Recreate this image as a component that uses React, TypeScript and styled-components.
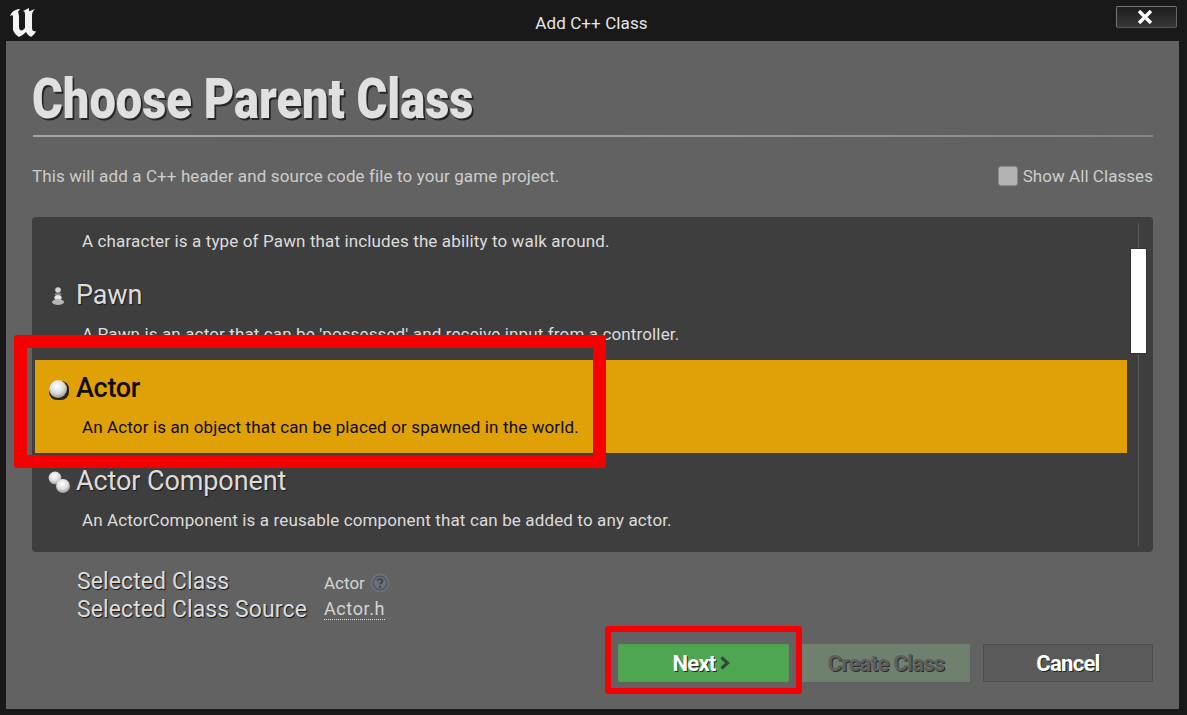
import styled, { createGlobalStyle } from 'styled-components'

const GlobalStyle = createGlobalStyle`
  html, body {
    margin: 0;
    padding: 0;
    background: #191919;
    overflow: hidden;
    font-family: Roboto, "Liberation Sans", sans-serif;
  }
  * { box-sizing: border-box; }
`

const Window = styled.div`
  position: relative;
  width: 1187px;
  height: 715px;
  display: flex;
  flex-direction: column;
  background: #191919;
`

const TitleBar = styled.header`
  position: relative;
  height: 41px;
  flex: none;
  display: flex;
  align-items: center;
  justify-content: center;
  padding: 0 10px 0 9px;
`

const TitleText = styled.span`
  font-size: 17px;
  letter-spacing: 0.1px;
  color: #e6e6e6;
  margin-top: 5px;
  margin-right: 3px;
`

const LogoSlot = styled.div`
  position: absolute;
  left: 9px;
  top: 8px;
  width: 29px;
  height: 30px;
`

const CloseButton = styled.button`
  position: absolute;
  right: 10px;
  top: 6px;
  width: 61px;
  height: 22px;
  padding: 0 4px 0 0;
  display: flex;
  align-items: center;
  justify-content: center;
  background: linear-gradient(#1d1d1d, #333 85%, #3a3a3a);
  border: 1px solid #777;
  border-right-color: #666;
  border-bottom-color: #555;
  border-radius: 2px;
`

const Content = styled.main`
  flex: 1;
  margin: 0 8px 6px 6px;
  padding: 28px 26px 27px;
  background: #626262;
  display: flex;
  flex-direction: column;
`

const Heading = styled.h1`
  margin: 0;
  height: 60px;
  font-size: 55px;
  line-height: 60px;
  font-weight: 900;
  color: #e0e0e0;
  white-space: nowrap;
  transform: scaleX(0.855);
  transform-origin: left center;
  text-shadow: 2px 2px 0 #262626;
`

const Divider = styled.hr`
  margin: 6px 0 0 1px;
  height: 2px;
  border: 0;
  background: linear-gradient(to right, #a6a6a6, #9b9b9b 60%, #858585);
`

const InfoRow = styled.div`
  margin-top: 28px;
  height: 22px;
  display: flex;
  align-items: center;
  justify-content: space-between;
`

const InfoText = styled.span`
  font-size: 17px;
  letter-spacing: 0.11px;
  color: #cdcdcd;
`

const ShowAll = styled.label`
  display: flex;
  align-items: center;
  gap: 5px;
  font-size: 17px;
  letter-spacing: 0.05px;
  color: #cdcdcd;
`

const Checkbox = styled.span`
  width: 20px;
  height: 20px;
  border-radius: 3px;
  background: #b3b3b3;
  border: 1px solid #8a8a8a;
`

const ClassPanel = styled.section`
  margin-top: 30px;
  height: 335px;
  flex: none;
  display: flex;
  background: #3e3e3e;
  border-radius: 4px;
  overflow: hidden;
`

const ClassList = styled.div`
  flex: 1;
  padding-left: 3px;
  min-width: 0;
`

const ClassRow = styled.div<{ $selected?: boolean; $offset?: number }>`
  height: 93px;
  margin-top: ${(p) => p.$offset ?? 0}px;
  padding: 0 0 0 12px;
  display: grid;
  grid-template-rows: 55px 1fr;
  background: ${(p) => (p.$selected ? '#dfa106' : 'transparent')};
  color: ${(p) => (p.$selected ? '#120c00' : '#dcdcdc')};
`

const RowHead = styled.div`
  display: flex;
  align-items: flex-end;
  gap: 7px;
  height: 44px;
`

const RowIcon = styled.span`
  width: 22px;
  height: 22px;
  flex: none;
  margin-bottom: 4px;
`

const RowTitle = styled.span<{ $selected?: boolean }>`
  font-size: 27px;
  line-height: 32px;
  font-weight: ${(p) => (p.$selected ? 500 : 400)};
  letter-spacing: ${(p) => (p.$selected ? '-0.3px' : '-0.1px')};
  text-shadow: ${(p) => (p.$selected ? 'none' : '1px 1px 1px #1c1c1c')};
`

const RowDesc = styled.span`
  padding-left: 35px;
  font-size: 17px;
  line-height: 20px;
  letter-spacing: 0.13px;
  margin-top: 2px;
`

const ScrollTrack = styled.div`
  position: relative;
  width: 26px;
  flex: none;
  margin: 6px 0;

  &::before {
    content: '';
    position: absolute;
    left: 11px;
    top: 0;
    bottom: 0;
    width: 1px;
    background: #5a5a5a;
  }
`

const ScrollThumb = styled.div`
  position: absolute;
  left: 3px;
  top: 25px;
  width: 17px;
  height: 106px;
  background: #fff;
  border: 1px solid #333;
`

const Details = styled.dl`
  margin: 16px 0 0 45px;
  height: 56px;
  display: grid;
  grid-template-columns: 247px 1fr;
  grid-auto-rows: 28px;
  align-items: center;
`

const DetailLabel = styled.dt`
  font-size: 23px;
  line-height: 28px;
  letter-spacing: 0.1px;
  color: #dcdcdc;
  text-shadow: 1px 1px 1px #151515;
`

const DetailValue = styled.dd`
  margin: 0;
  padding-top: 1px;
  display: flex;
  align-items: center;
  gap: 5px;
  font-size: 17px;
  color: #d4d4d4;
`

const SourceLink = styled.a`
  margin-top: -2px;
  font-size: 18px;
  line-height: 20px;
  letter-spacing: 0.6px;
  color: #d4d4d4;
  border-bottom: 1px dotted #e0e0e0;
`

const Footer = styled.footer`
  margin-top: 20px;
  height: 38px;
  display: flex;
  justify-content: flex-end;
  gap: 13px;
`

const ActionButton = styled.button<{ $variant: 'primary' | 'disabled' | 'plain'; $width: number }>`
  width: ${(p) => p.$width}px;
  height: 38px;
  padding: 0 ${(p) => (p.$variant === 'primary' ? 4 : 0)}px 0 0;
  display: flex;
  align-items: center;
  justify-content: center;
  gap: 3px;
  font-family: inherit;
  font-size: 22px;
  font-weight: 700;
  letter-spacing: -0.7px;
  border-radius: 1px;
  color: ${(p) => (p.$variant === 'disabled' ? '#5c5f5c' : '#fff')};
  background: ${(p) =>
    p.$variant === 'primary' ? '#4ea650' : p.$variant === 'disabled' ? '#6f806f' : '#5a5a5a'};
  border: 1px solid ${(p) =>
    p.$variant === 'primary' ? '#529c54' : p.$variant === 'disabled' ? '#6f7e6f' : '#4c4c4c'};
  text-shadow: ${(p) => (p.$variant === 'disabled' ? '1px 1px 0 #2c2c2c' : '1px 1px 0 #1d2a1d')};
`

const Callout = styled.div<{ $left: number; $top: number; $width: number; $height: number; $weight: number }>`
  position: absolute;
  left: ${(p) => p.$left}px;
  top: ${(p) => p.$top}px;
  width: ${(p) => p.$width}px;
  height: ${(p) => p.$height}px;
  border: ${(p) => p.$weight}px solid #f50000;
  border-radius: 3px;
  pointer-events: none;
`

function UnrealLogo() {
  return (
    <svg width="29" height="30" viewBox="0 0 29 30">
      <path
        fill="#f2f2f2"
        d="M1 8 C3 3 7 1 11 1 L9 4 C9 4 10 6 10 9 L10 19 C10 22 12 23 14 22 L16 20 L16 6 C16 4 15 3 14 3 L20 0 L20 3 L21 3 L26 1 C24 3 23 5 23 7 L23 20 C23 22 24 24 27 23 C26 26 24 27 22 29 C20 28 18 26 17 24 C15 26 12 28 10 29 C7 27 5 25 4 22 L4 9 C4 7 3 7 1 8 Z"
      />
    </svg>
  )
}

function CloseIcon() {
  return (
    <svg width="16" height="14" viewBox="0 0 16 14">
      <path d="M2 1 L14 13 M14 1 L2 13" stroke="#fff" strokeWidth="3.4" fill="none" />
    </svg>
  )
}

function Ball({ cx, cy, r, id }: { cx: number; cy: number; r: number; id: string }) {
  return (
    <>
      <radialGradient id={id} cx="45%" cy="35%" r="70%">
        <stop offset="0%" stopColor="#ffffff" />
        <stop offset="55%" stopColor="#dcdcdc" />
        <stop offset="100%" stopColor="#8a8a8a" />
      </radialGradient>
      <circle cx={cx} cy={cy} r={r} fill={`url(#${id})`} />
    </>
  )
}

function PawnIcon() {
  return (
    <svg width="22" height="22" viewBox="0 0 22 22">
      <circle cx="11" cy="5" r="2.8" fill="#d4d4d4" />
      <rect x="7.6" y="8.2" width="6.8" height="2" rx="1" fill="#8f8f8f" />
      <ellipse cx="11" cy="12.6" rx="3.6" ry="2.6" fill="#e8e8e8" />
      <ellipse cx="11" cy="17" rx="6" ry="3" fill="#b5b5b5" />
    </svg>
  )
}

function ActorIcon() {
  return (
    <svg width="22" height="22" viewBox="0 0 22 22">
      <rect x="2" y="3" width="20" height="19" rx="8" fill="#2c2410" />
      <Ball id="actor-ball" cx={11} cy={11} r={9} />
    </svg>
  )
}

function ComponentIcon() {
  return (
    <svg width="24" height="22" viewBox="0 0 24 22">
      <Ball id="comp-a" cx={8} cy={7} r={6.4} />
      <Ball id="comp-b" cx={16} cy={15} r={7} />
    </svg>
  )
}

function HelpIcon() {
  return (
    <svg width="20" height="20" viewBox="0 0 20 20">
      <circle cx="10" cy="10" r="9.5" fill="#6b6f7a" />
      <circle cx="10" cy="10" r="6.8" fill="none" stroke="#4d505a" strokeWidth="1.2" />
      <path d="M7.6 8 C7.8 5.6 12.4 5.6 12.4 8 C12.4 9.8 10 9.8 10 11.6" fill="none" stroke="#3f424c" strokeWidth="1.7" />
      <circle cx="10" cy="14" r="1.1" fill="#3f424c" />
    </svg>
  )
}

export default function App() {
  return (
    <Window>
      <GlobalStyle />
      <TitleBar>
        <LogoSlot>
          <UnrealLogo />
        </LogoSlot>
        <TitleText>Add C++ Class</TitleText>
        <CloseButton>
          <CloseIcon />
        </CloseButton>
      </TitleBar>

      <Content>
        <Heading>Choose Parent Class</Heading>
        <Divider />
        <InfoRow>
          <InfoText>This will add a C++ header and source code file to your game project.</InfoText>
          <ShowAll>
            <Checkbox />
            Show All Classes
          </ShowAll>
        </InfoRow>

        <ClassPanel>
          <ClassList>
            <ClassRow $offset={-43}>
              <RowHead />
              <RowDesc>A character is a type of Pawn that includes the ability to walk around.</RowDesc>
            </ClassRow>
            <ClassRow>
              <RowHead>
                <RowIcon>
                  <PawnIcon />
                </RowIcon>
                <RowTitle>Pawn</RowTitle>
              </RowHead>
              <RowDesc>A Pawn is an actor that can be 'possessed' and receive input from a controller.</RowDesc>
            </ClassRow>
            <ClassRow $selected>
              <RowHead>
                <RowIcon>
                  <ActorIcon />
                </RowIcon>
                <RowTitle $selected>Actor</RowTitle>
              </RowHead>
              <RowDesc>An Actor is an object that can be placed or spawned in the world.</RowDesc>
            </ClassRow>
            <ClassRow>
              <RowHead>
                <RowIcon>
                  <ComponentIcon />
                </RowIcon>
                <RowTitle>Actor Component</RowTitle>
              </RowHead>
              <RowDesc>An ActorComponent is a reusable component that can be added to any actor.</RowDesc>
            </ClassRow>
          </ClassList>
          <ScrollTrack>
            <ScrollThumb />
          </ScrollTrack>
        </ClassPanel>

        <Details>
          <DetailLabel>Selected Class</DetailLabel>
          <DetailValue>
            Actor
            <HelpIcon />
          </DetailValue>
          <DetailLabel>Selected Class Source</DetailLabel>
          <DetailValue>
            <SourceLink>Actor.h</SourceLink>
          </DetailValue>
        </Details>

        <Footer>
          <ActionButton $variant="primary" $width={171}>
            Next
            <svg width="12" height="14" viewBox="0 0 12 14">
              <path d="M2.5 1.5 L8.5 7 L2.5 12.5" fill="none" stroke="#34483a" strokeWidth="3.2" />
            </svg>
          </ActionButton>
          <ActionButton $variant="disabled" $width={168}>Create Class</ActionButton>
          <ActionButton $variant="plain" $width={170}>Cancel</ActionButton>
        </Footer>
      </Content>

      <Callout $left={14} $top={335} $width={592} $height={133} $weight={13} />
      <Callout $left={605} $top={626} $width={197} $height={68} $weight={6} />
    </Window>
  )
}
